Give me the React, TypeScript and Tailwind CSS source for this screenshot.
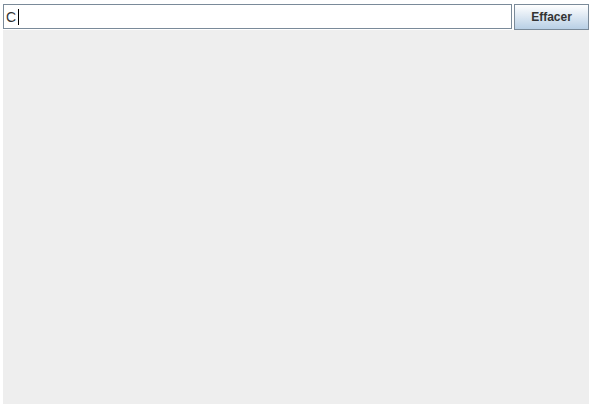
export default function App() {
  return (
    <div className="w-[594px] h-[410px] bg-white pt-[4px] pl-[3px] font-['Liberation_Sans',Arial,sans-serif]">
      <div className="w-[586px] h-[400px] bg-[#eeeeee] flex flex-col">
        {/* Search row */}
        <div className="flex items-start gap-[2px] bg-white">
          <div className="w-[509px] h-[25px] border border-[#7a8a99] bg-white flex items-center pl-[2px]">
            <span className="text-[14px] leading-none text-[#333333]">C</span>
            <span className="ml-[2px] w-[1px] h-[16px] bg-black" />
          </div>
          <button
            type="button"
            className="w-[75px] h-[26px] border border-[#7a8a99] bg-gradient-to-b from-[#ffffff] to-[#b8cfe5] text-[12px] font-bold text-[#333333] flex items-center justify-center"
          >
            Effacer
          </button>
        </div>
        <div className="flex-1" />
      </div>
    </div>
  )
}
